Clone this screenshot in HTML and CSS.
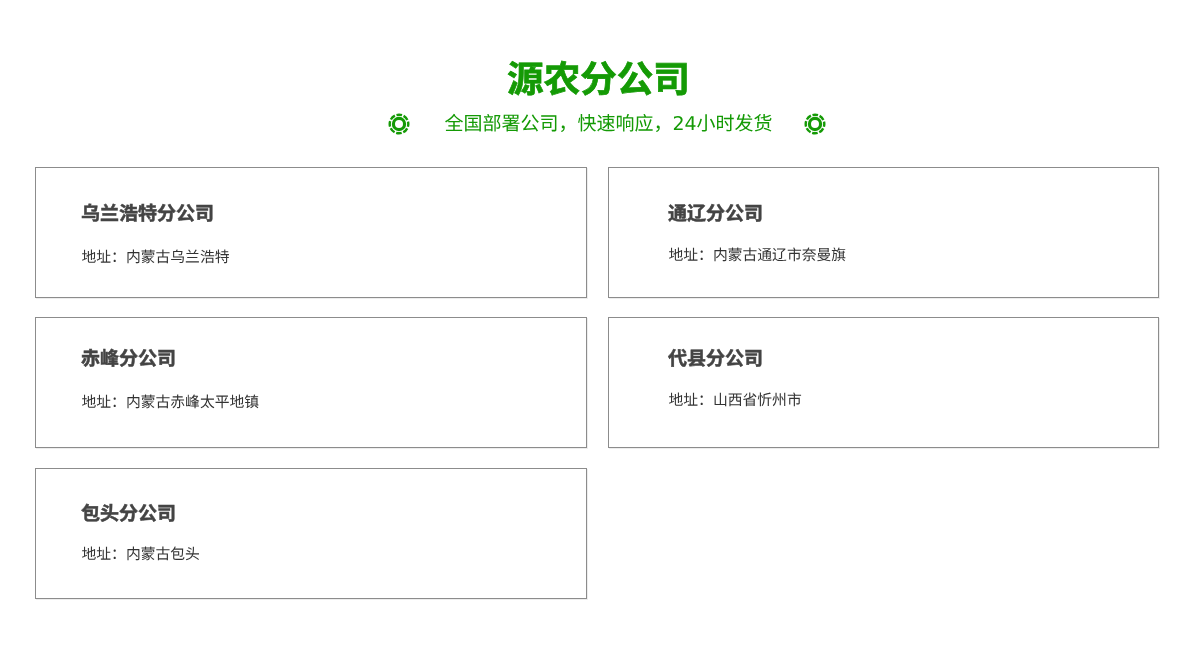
FILE: index.html
```html
<!DOCTYPE html>
<html lang="zh-CN">
<head>
<meta charset="utf-8">
<title>源农分公司</title>
<link rel="stylesheet" href="styles.css">
</head>
<body>
<header class="head">
  <h1 class="title">源农分公司</h1>
  <div class="sub">
    <svg class="ring" viewBox="0 0 22 22"><circle cx="11" cy="11" r="9.3" fill="none" stroke="#149a05" stroke-width="2.4" stroke-dasharray="5.6 1.7" stroke-dashoffset="2.8"/><circle cx="11" cy="11" r="5.6" fill="none" stroke="#149a05" stroke-width="3.2"/></svg>
    <p class="sub-text">全国部署公司，快速响应，24小时发货</p>
    <svg class="ring" viewBox="0 0 22 22"><circle cx="11" cy="11" r="9.3" fill="none" stroke="#149a05" stroke-width="2.4" stroke-dasharray="5.6 1.7" stroke-dashoffset="2.8"/><circle cx="11" cy="11" r="5.6" fill="none" stroke="#149a05" stroke-width="3.2"/></svg>
  </div>
</header>
<main class="grid">
  <section class="card a"><h2 class="name">乌兰浩特分公司</h2><p class="addr">地址：内蒙古乌兰浩特</p></section>
  <section class="card b"><h2 class="name">通辽分公司</h2><p class="addr">地址：内蒙古通辽市奈曼旗</p></section>
  <section class="card c"><h2 class="name">赤峰分公司</h2><p class="addr">地址：内蒙古赤峰太平地镇</p></section>
  <section class="card d"><h2 class="name">代县分公司</h2><p class="addr">地址：山西省忻州市</p></section>
  <section class="card e"><h2 class="name">包头分公司</h2><p class="addr">地址：内蒙古包头</p></section>
</main>
</body>
</html>
```
FILE: styles.css
```css
* { box-sizing: border-box; }
html, body { margin: 0; padding: 0; background: #fff; }
body { font-family: "DejaVu Sans", "Noto Sans CJK SC", sans-serif; height: 652px; overflow: hidden; text-rendering: geometricPrecision; }
.head { padding-top: 57px; display: flex; flex-direction: column; align-items: center; will-change: opacity; }
.title { margin: 0 0 0 -3px; font-size: 36.6px; line-height: 46px; font-weight: 700; color: #149a05; -webkit-text-stroke: 0.7px #149a05; }
.sub { display: flex; align-items: center; gap: 34px; height: 24px; margin-top: 9px; margin-left: 14px; }
.sub-text { margin: 0 -3px 0 0; font-size: 19px; line-height: 24px; color: #149a05; }
.ring { width: 22px; height: 22px; display: block; }
.grid { display: grid; grid-template-columns: 552px 551px; column-gap: 21px; row-gap: 19.6px; grid-auto-rows: 130.8px; padding: 31px 0 0 35px; will-change: opacity; }
.card { border: 1px solid #8c8c8c; box-shadow: 1px 1px 0 rgba(0, 0, 0, .07); padding-left: 45px; display: flex; flex-direction: column; }
.name { margin: 0; font-size: 19px; line-height: 24px; font-weight: 700; color: #444; -webkit-text-stroke: 0.5px #444; }
.addr { margin: 0 0 0 .5px; font-size: 14.8px; line-height: 20px; color: #333; }
.a { padding-top: 34px; } .a .addr { margin-top: 22px; }
.b { padding-top: 34px; padding-left: 59px; } .b .addr { margin-top: 20px; }
.c { padding-top: 29px; } .c .addr { margin-top: 22px; }
.d { padding-top: 29px; padding-left: 59px; } .d .addr { margin-top: 20px; }
.e { padding-top: 33px; } .e .addr { margin-top: 19px; }
```
